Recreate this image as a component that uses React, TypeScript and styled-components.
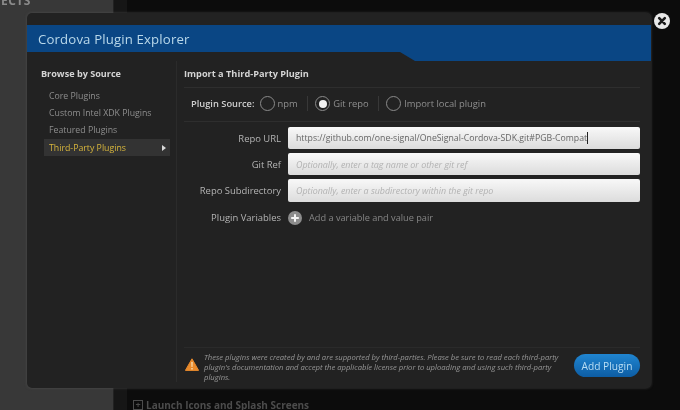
import React from "react";
import styled, { createGlobalStyle } from "styled-components";

const Global = createGlobalStyle`
  html, body { margin: 0; padding: 0; background: #0d0d0d; }
  body { font-family: "Open Sans", "Liberation Sans", sans-serif; overflow: hidden; }
  #root { width: 680px; height: 410px; }
`;

const Page = styled.div`
  position: relative;
  display: flex;
  width: 680px;
  height: 410px;
  overflow: hidden;
  filter: blur(0.35px);
`;
const BackSide = styled.div`
  width: 114px;
  background: #383838;
  border-right: 1px solid #222;
  box-sizing: border-box;
  padding-left: 1px;
`;
const BackSideTitle = styled.div`
  margin-top: -7px;
  font-size: 12px;
  line-height: 16px;
  font-weight: 700;
  letter-spacing: 0.5px;
  color: #8a8a8a;
`;
const BackGutter = styled.div`
  width: 13px;
  background: #161616;
`;
const BackMain = styled.div`
  flex: 1;
  background: #0c0c0c;
  display: flex;
  align-items: flex-end;
  padding: 0 0 0 6px;
`;
const BackHeading = styled.div`
  display: flex;
  align-items: center;
  gap: 3px;
  height: 11px;
  font-size: 10px;
  font-weight: 700;
  color: #4c4c4c;
  white-space: nowrap;
`;
const PlusBox = styled.span`
  display: inline-flex;
  align-items: center;
  justify-content: center;
  width: 8px;
  height: 8px;
  border: 1px solid #4c4c4c;
  font-size: 9px;
  line-height: 8px;
`;

const Modal = styled.div`
  position: absolute;
  left: 27px;
  top: 13px;
  width: 624px;
  height: 375px;
  box-sizing: border-box;
  padding-top: 12px;
  display: flex;
  flex-direction: column;
  background: #222222;
  border-radius: 5px;
  box-shadow: 0 0 3px rgba(90, 90, 90, 0.7);
`;
const Header = styled.div`
  height: 36px;
  background: #0a4684;
  clip-path: polygon(0 0, 100% 0, 100% 100%, 388px 100%, 373px 27px, 0 27px);
  box-sizing: border-box;
  padding: 0 0 9px 11px;
  display: flex;
  align-items: center;
`;
const HeaderTitle = styled.h1`
  margin: 0;
  font-size: 13.2px;
  font-weight: 400;
  color: #b9d8ea;
  letter-spacing: 0.15px;
`;
const Close = styled.button`
  position: absolute;
  left: 627px;
  top: 0;
  width: 16px;
  height: 16px;
  padding: 0;
  border: 0;
  background: none;
  display: block;
`;
const Body = styled.div`
  flex: 1;
  display: flex;
  min-height: 0;
`;
const Side = styled.nav`
  width: 149px;
  box-sizing: border-box;
  padding: 4px 6px 0 14px;
`;
const SideTitle = styled.h2`
  margin: 0 0 4px;
  font-size: 9.1px;
  line-height: 18px;
  font-weight: 700;
  color: #d4d4d4;
`;
const SideItem = styled.div<{ $active?: boolean }>`
  height: 17.3px;
  margin-left: 3px;
  padding: 0 4px 0 5px;
  display: flex;
  align-items: center;
  justify-content: space-between;
  font-size: 8.75px;
  color: ${(p) => (p.$active ? "#d8b63c" : "#8e8e8e")};
  background: ${(p) => (p.$active ? "#333333" : "transparent")};
`;
const Arrow = styled.span`
  width: 0;
  height: 0;
  border-left: 4px solid #d8d8d8;
  border-top: 3px solid transparent;
  border-bottom: 3px solid transparent;
`;
const Main = styled.section`
  flex: 1;
  display: flex;
  flex-direction: column;
  box-sizing: border-box;
  padding: 4px 11px 0 7px;
  border-left: 1px solid #2b2b2b;
  margin-bottom: 6px;
`;
const MainTitle = styled.h2`
  margin: 0;
  height: 23px;
  box-sizing: border-box;
  border-bottom: 1px solid #2e2e2e;
  font-size: 9.2px;
  line-height: 18px;
  font-weight: 700;
  color: #d4d4d4;
`;
const SourceRow = styled.div`
  height: 34px;
  box-sizing: border-box;
  border-bottom: 1px solid #2e2e2e;
  display: flex;
  align-items: center;
  padding: 0 0 2px 7px;
`;
const SourceLabel = styled.span`
  font-size: 9.3px;
  font-weight: 600;
  color: #d0d0d0;
  margin-right: 5px;
`;
const RadioOption = styled.label<{ $divider?: boolean }>`
  display: flex;
  align-items: center;
  gap: 3px;
  font-size: 9.4px;
  color: #8e8e8e;
  height: 15px;
  padding-right: 9px;
  margin-right: 7.5px;
  border-right: ${(p) => (p.$divider ? "1px solid #383838" : "0")};
`;
const RadioCircle = styled.span<{ $on?: boolean }>`
  width: 15px;
  height: 15px;
  box-sizing: border-box;
  border: 1px solid #8a8a8a;
  border-radius: 50%;
  display: flex;
  align-items: center;
  justify-content: center;
  &::after {
    content: "";
    width: 8px;
    height: 8px;
    border-radius: 50%;
    background: ${(p) => (p.$on ? "#f2f2f2" : "transparent")};
  }
`;
const Form = styled.div`
  padding-top: 5px;
  display: grid;
  grid-template-columns: 97px 1fr;
  column-gap: 7px;
  row-gap: 4px;
  align-items: center;
`;
const FieldLabel = styled.span`
  font-size: 9.45px;
  color: #b4b4b4;
  text-align: right;
`;
const Field = styled.div<{ $placeholder?: boolean }>`
  height: 22.2px;
  box-sizing: border-box;
  padding-left: 8px;
  border-radius: 2px;
  background: linear-gradient(#f8f8f8, #dcdcdc);
  display: flex;
  align-items: center;
  white-space: nowrap;
  font-size: ${(p) => (p.$placeholder ? "8.9px" : "8.72px")};
  font-style: ${(p) => (p.$placeholder ? "italic" : "normal")};
  color: ${(p) => (p.$placeholder ? "#b2b2b2" : "#666")};
`;
const Caret = styled.span`
  display: inline-block;
  width: 1px;
  height: 12px;
  background: #222;
`;
const AddRow = styled.div`
  height: 24px;
  display: flex;
  align-items: center;
  gap: 7px;
  font-size: 9.2px;
  color: #868686;
`;
const Spacer = styled.div`
  flex: 1;
`;
const Footer = styled.div`
  height: 35px;
  box-sizing: border-box;
  border-top: 1px solid #2a2a2a;
  display: flex;
  align-items: flex-start;
  padding-top: 4px;
`;
const Warn = styled.svg`
  width: 14px;
  height: 13px;
  margin: 6px 0 0 1px;
  flex: none;
`;
const Notice = styled.p`
  margin: 0 0 0 5px;
  width: 358px;
  font-size: 7.65px;
  line-height: 10px;
  font-style: italic;
  color: #969696;
`;
const AddButton = styled.button`
  margin: 2px 0 0 auto;
  width: 66px;
  height: 23px;
  padding: 0;
  border: 0;
  border-radius: 12px;
  background: linear-gradient(#2085d0, #0d5da4);
  color: #b9def4;
  font-family: inherit;
  font-size: 10.2px;
`;

export default function App() {
  return (
    <Page>
      <Global />
      <BackSide>
        <BackSideTitle>ECTS</BackSideTitle>
      </BackSide>
      <BackGutter />
      <BackMain>
        <BackHeading>
          <PlusBox>+</PlusBox>Launch Icons and Splash Screens
        </BackHeading>
      </BackMain>
      <Modal>
        <Close aria-label="Close">
          <svg width="16" height="16" viewBox="0 0 16 16">
            <circle cx="8" cy="8" r="8" fill="#e8e8e8" />
            <path d="M5.2 5.2 10.8 10.8M10.8 5.2 5.2 10.8" stroke="#1a1a1a" strokeWidth="2.6" strokeLinecap="round" />
          </svg>
        </Close>
        <Header>
          <HeaderTitle>Cordova Plugin Explorer</HeaderTitle>
        </Header>
        <Body>
          <Side>
            <SideTitle>Browse by Source</SideTitle>
            <SideItem>Core Plugins</SideItem>
            <SideItem>Custom Intel XDK Plugins</SideItem>
            <SideItem>Featured Plugins</SideItem>
            <SideItem $active>
              Third-Party Plugins
              <Arrow />
            </SideItem>
          </Side>
          <Main>
            <MainTitle>Import a Third-Party Plugin</MainTitle>
            <SourceRow>
              <SourceLabel>Plugin Source:</SourceLabel>
              <RadioOption $divider>
                <RadioCircle />
                npm
              </RadioOption>
              <RadioOption $divider>
                <RadioCircle $on />
                Git repo
              </RadioOption>
              <RadioOption>
                <RadioCircle />
                Import local plugin
              </RadioOption>
            </SourceRow>
            <Form>
              <FieldLabel>Repo URL</FieldLabel>
              <Field>
                https://github.com/one-signal/OneSignal-Cordova-SDK.git#PGB-Compat
                <Caret />
              </Field>
              <FieldLabel>Git Ref</FieldLabel>
              <Field $placeholder>Optionally, enter a tag name or other git ref</Field>
              <FieldLabel>Repo Subdirectory</FieldLabel>
              <Field $placeholder>Optionally, enter a subdirectory within the git repo</Field>
              <FieldLabel>Plugin Variables</FieldLabel>
              <AddRow>
                <svg width="14" height="14" viewBox="0 0 14 14">
                  <circle cx="7" cy="7" r="7" fill="#8c8c8c" />
                  <path d="M7 3.2v7.6M3.2 7h7.6" stroke="#f4f4f4" strokeWidth="2" />
                </svg>
                Add a variable and value pair
              </AddRow>
            </Form>
            <Spacer />
            <Footer>
              <Warn viewBox="0 0 14 13">
                <path d="M7 .8 13.6 12.4H.4Z" fill="#e88a2c" stroke="#e88a2c" strokeLinejoin="round" />
                <path d="M6.3 4h1.4l-.2 5h-1zM6.3 10h1.4v1.4H6.3z" fill="#f8e0b8" />
              </Warn>
              <Notice>
                These plugins were created by and are supported by third-parties. Please be sure to read each third-party
                plugin's documentation and accept the applicable license prior to uploading and using such third-party
                plugins.
              </Notice>
              <AddButton>Add Plugin</AddButton>
            </Footer>
          </Main>
        </Body>
      </Modal>
    </Page>
  );
}
